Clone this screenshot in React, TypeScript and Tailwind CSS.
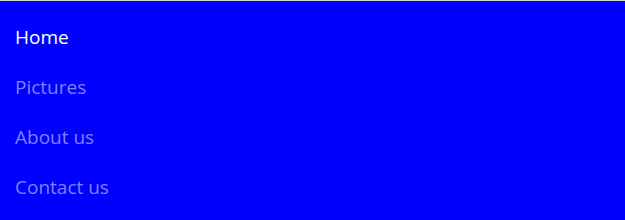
const items = ["Home", "Pictures", "About us", "Contact us"];

export default function App() {
  return (
    <div className="h-[220px] w-full border-t border-[#d4d4d4] bg-[#0000ff] pt-[11px] font-['Open_Sans',sans-serif]">
      <ul>
        {items.map((item, i) => (
          <li key={item} className="flex h-[50px] items-center px-[15px]">
            <a
              href="#"
              className={
                i === 0
                  ? "text-[19px] text-white"
                  : "text-[19px] text-[#8080ff]"
              }
            >
              {item}
            </a>
          </li>
        ))}
      </ul>
    </div>
  );
}
